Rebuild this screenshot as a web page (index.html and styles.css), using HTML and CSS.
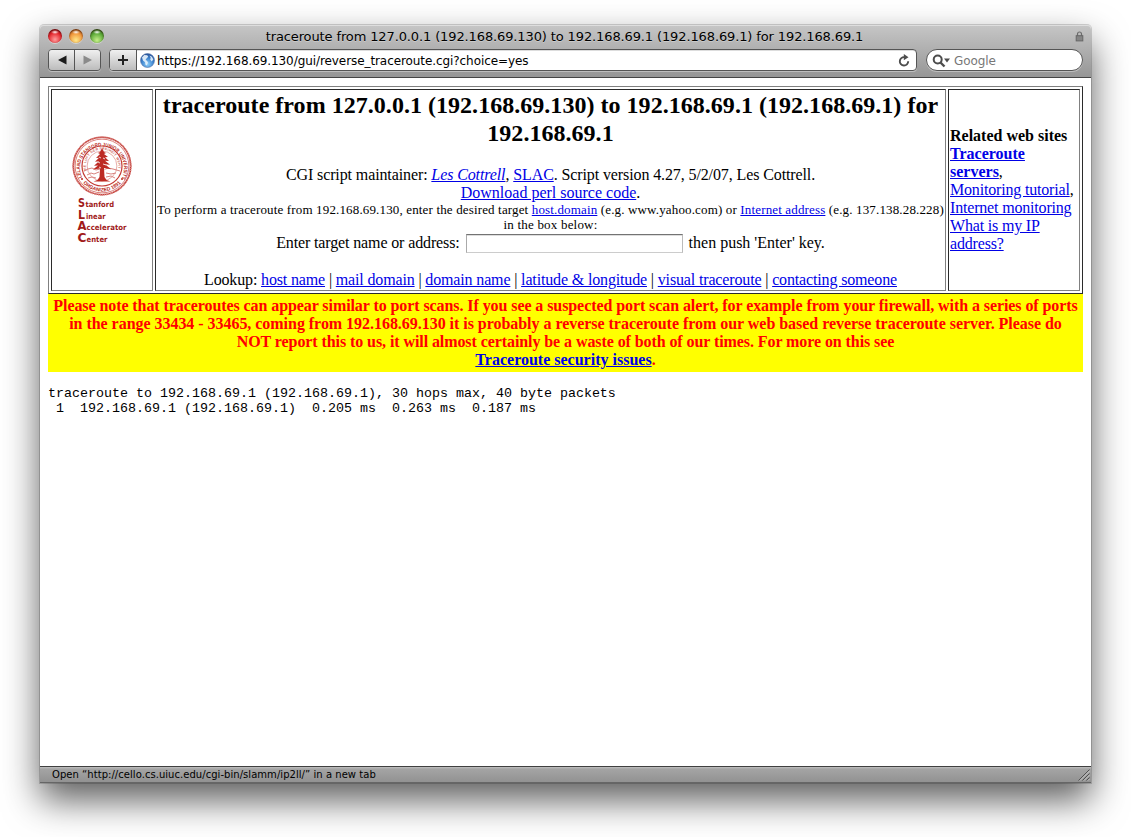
FILE: index.html
```html
<!DOCTYPE html>
<html lang="en">
<head>
<meta charset="utf-8">
<title>traceroute from 127.0.0.1 (192.168.69.130) to 192.168.69.1</title>
<link rel="stylesheet" href="styles.css">
</head>
<body>
<div class="window">
  <header class="chrome">
    <div class="titlebar">
      <div class="lights"><i class="light red"></i><i class="light amber"></i><i class="light green"></i></div>
      <div class="title"><span>traceroute from 127.0.0.1 (192.168.69.130) to 192.168.69.1 (192.168.69.1) for 192.168.69.1</span></div>
      <svg class="lock" width="9" height="11" viewBox="0 0 9 11"><path d="M2.500 5V3a2 2 0 0 1 4 0v2" fill="none" stroke="#6b6b6b" stroke-width="1.200"/><rect x="1.200" y="4.700" width="6.600" height="5.200" fill="#858585" stroke="#666"/></svg>
    </div>
    <div class="toolbar">
      <div class="nav">
        <span class="key"><svg width="24" height="20" viewBox="0 0 24 20"><path d="M8 10l8.500-4.500v9z" fill="#1c1c1c"/></svg></span>
        <span class="key"><svg width="24" height="20" viewBox="0 0 24 20"><path d="M16 10l-8.500-4.500v9z" fill="#8a8a8a"/></svg></span>
      </div>
      <div class="address">
        <span class="key plus"><svg width="27" height="20" viewBox="0 0 27 20"><path d="M8 10h10M13 5v10" stroke="#222" stroke-width="2"/></svg></span>
        <svg class="globe" width="15" height="15" viewBox="0 0 15 15">
          <defs><radialGradient id="sea" cx=".5" cy=".75" r=".75"><stop offset="0" stop-color="#8fd0fa"/><stop offset=".55" stop-color="#3f85cf"/><stop offset="1" stop-color="#234c94"/></radialGradient></defs>
          <circle cx="7.500" cy="7.500" r="7" fill="url(#sea)" stroke="#5576a8" stroke-width=".6"/>
          <path d="M2 4.500L4.200 2l3 .2 1 1.600-1.700 1.700L5.500 7l1.500.8 1 2-1.400 2.700-1.200-.9-.3-2.400L3 7.500zM9.500 2.500l2.400 1.200 1.400 2.700-1.600 2.200-1.500-2 .5-1.800z" fill="#eaf4fc" opacity=".9"/>
        </svg>
        <span class="url">https://192.168.69.130/gui/reverse_traceroute.cgi?choice=yes</span>
        <svg class="reload" width="12" height="13" viewBox="0 0 12 13"><path d="M10.200 7.300A4.200 4.200 0 1 1 6.500 3.200" fill="none" stroke="#4d4d4d" stroke-width="1.900"/><path d="M5.800 0v6.200L10.500 3.200z" fill="#4d4d4d"/></svg>
      </div>
      <div class="search">
        <svg width="19" height="14" viewBox="0 0 19 14"><circle cx="5.700" cy="5.500" r="4" fill="none" stroke="#4d4d4d" stroke-width="2"/><path d="M8.500 8.500l4 4" stroke="#4d4d4d" stroke-width="2.400"/><path d="M12 4.500h6l-3 4z" fill="#4d4d4d"/></svg>
        <span>Google</span>
      </div>
    </div>
  </header>

  <main class="page">
    <div class="frame">
      <div class="cell brand">
        <svg class="seal" width="60" height="60" viewBox="-30 -30 60 60">
          <defs>
            <path id="arc-top" d="M-20 11.500A22 22 0 1 1 20 11.500"/>
            <path id="arc-bottom" d="M-20.500 15A25.400 25.400 0 0 0 20.500 15"/>
            <path id="arc-motto" d="M-15.500 5A16.300 16.300 0 1 1 15.500 5"/>
          </defs>
          <circle r="28.700" fill="#fff" stroke="#c43a34" stroke-width="1.600"/>
          <circle r="28.800" fill="none" stroke="#d98a86" stroke-width="1.800" stroke-dasharray="1 1"/>
          <circle r="26.900" fill="none" stroke="#d0605b" stroke-width=".8"/>
          <circle r="20" fill="none" stroke="#c43a34" stroke-width="1.200"/>
          <circle r="14.900" fill="none" stroke="#dc8985" stroke-width=".7"/>
          <g fill="#b82820" font-family="Liberation Sans, sans-serif" font-weight="bold">
            <text font-size="5.200"><textPath href="#arc-top" textLength="89" lengthAdjust="spacingAndGlyphs">LELAND STANFORD JUNIOR UNIVERSITY</textPath></text>
            <text font-size="5"><textPath href="#arc-bottom" startOffset="50%" text-anchor="middle">ORGANIZED 1891</textPath></text>
            <text font-size="3.400" opacity=".7"><textPath href="#arc-motto" textLength="58">DIE LUFT DER FREIHEIT WEHT</textPath></text>
          </g>
          <circle cx="-20" cy="13" r="1" fill="#b82820"/><circle cx="20" cy="13" r="1" fill="#b82820"/>
          <path d="M-18 5l4-2 4-1 4 2 4-1 4 1 4-2 5 1 7 2M-15 9l4-2 3 1 5-2M4 7l5 1 5-1M-14 12l4-1 4 1M4 11l5-1 4 2" fill="none" stroke="#d9837f" stroke-width="1"/>
          <path d="M0-18l2 4 2 1-2 1 4 3-3 .3 4 3.700-4-.3 5 4-5-.5 6 5-7-1.200.5 9 2 3 4 1.500h-17l4-1.500 2-3 .5-8.500-7 1 5-4-4 .3 5-4.500-4 .5 4-4-3 .2 4-4-2-1 2-1z" fill="#bd2a23"/>
          <path d="M-4-4l2 1M1-8l2 1M1-2l3 1M-3 1l2 1M2 4l3 0M-3-9l2 1" stroke="#fff" stroke-width=".8"/>
        </svg>
        <svg class="wordmark" width="52" height="50" viewBox="0 0 52 50">
          <g fill="#a11a1a" font-family="DejaVu Sans, sans-serif" font-weight="bold">
            <g font-size="12.500"><text x="0" y="10.500" textLength="7" lengthAdjust="spacingAndGlyphs">S</text><text x="0" y="22.500" textLength="7" lengthAdjust="spacingAndGlyphs">L</text><text x="-.5" y="34" textLength="9" lengthAdjust="spacingAndGlyphs">A</text><text x="-.5" y="45.500" textLength="9" lengthAdjust="spacingAndGlyphs">C</text></g>
            <g font-size="7.500"><text x="7.500" y="10.500" textLength="28.500" lengthAdjust="spacingAndGlyphs">tanford</text><text x="8" y="22.500" textLength="19.500" lengthAdjust="spacingAndGlyphs">inear</text><text x="8.500" y="34" textLength="40" lengthAdjust="spacingAndGlyphs">ccelerator</text><text x="8.500" y="45.500" textLength="21" lengthAdjust="spacingAndGlyphs">enter</text></g>
          </g>
        </svg>
      </div>

      <div class="cell main">
        <h1>traceroute from 127.0.0.1 (192.168.69.130) to 192.168.69.1 (192.168.69.1) for<br>192.168.69.1</h1>
        <p><span class="credit">CGI script maintainer: <a><em>Les Cottrell</em></a>, <a>SLAC</a>. Script version 4.27, 5/2/07, Les Cottrell.</span><br><a>Download perl source code</a>.</p>
        <p class="small">To perform a traceroute from 192.168.69.130, enter the desired target <a>host.domain</a> (e.g. www.yahoo.com) or <a>Internet address</a> (e.g. 137.138.28.228)<br><span class="loose-end">in the box below:</span></p>
        <div class="entry"><span class="label">Enter target name or address:</span><span class="field"></span><span>then push 'Enter' key.</span></div>
        <p class="lookup">Lookup: <a>host name</a> | <a>mail domain</a> | <a>domain name</a> | <a>latitude &amp; longitude</a> | <a>visual traceroute</a> | <a>contacting someone</a></p>
      </div>

      <div class="cell related"><p><b>Related web sites<br><a>Traceroute<br>servers</a></b>,<br><a>Monitoring tutorial</a>,<br><a>Internet monitoring</a><br><a>What is my IP<br>address?</a></p></div>
    </div>

    <div class="notice"><span class="tight">Please note that traceroutes can appear similar to port scans. If you see a suspected port scan alert, for example from your firewall, with a series of ports</span><br><span class="snug">in the range 33434 - 33465, coming from 192.168.69.130 it is probably a reverse traceroute from our web based reverse traceroute server. Please do</span><br><span class="tight">NOT report this to us, it will almost certainly be a waste of both of our times. For more on this see</span><br><a>Traceroute security issues</a>.</div>

    <pre>traceroute to 192.168.69.1 (192.168.69.1), 30 hops max, 40 byte packets
 1  192.168.69.1 (192.168.69.1)  0.205 ms  0.263 ms  0.187 ms</pre>
  </main>

  <footer class="status">
    <span>Open “http://cello.cs.uiuc.edu/cgi-bin/slamm/ip2ll/” in a new tab</span>
    <svg width="12" height="12" viewBox="0 0 12 12"><path d="M.5 11.500l11-11M4.500 11.500l7-7M8.500 11.500l3-3" stroke="#505050"/><path d="M2 11.500l9.500-9.500M6 11.500l5.500-5.500M10 11.500l1.500-1.500" stroke="#d2d2d2" stroke-width=".8"/></svg>
  </footer>
</div>
</body>
</html>
```

FILE: styles.css
```css
* { box-sizing: border-box; }
html, body { margin: 0; width: 1131px; height: 837px; overflow: hidden; background: #fff; }
body { padding: 25px 40px 0; font: 16px/18px "Liberation Serif", "Times New Roman", serif; color: #000; }
svg { display: block; flex: none; }
p, h1, pre { margin: 0; }
p, h1 { white-space: nowrap; }
a { color: #0000e6; text-decoration: underline; }

.window {
  width: 1051px; height: 758px; display: flex; flex-direction: column;
  border-radius: 4px 4px 0 0; background: #fff;
  box-shadow: 0 0 0 1px rgba(0,0,0,.16), 0 17px 36px rgba(0,0,0,.64);
}
.chrome {
  height: 53px; flex: none; border-bottom: 1px solid #454545; border-radius: 4px 4px 0 0;
  background: linear-gradient(#c6c6c6, #969696); box-shadow: inset 0 1px #dedede;
  font-family: "DejaVu Sans", sans-serif;
}
.titlebar { height: 22px; display: flex; align-items: center; padding: 0 8px; }
.lights { display: flex; gap: 7px; width: 62px; }
.light { width: 14px; height: 14px; border-radius: 50%; box-shadow: inset 0 1px 2px rgba(40,0,0,.65), 0 1px rgba(255,255,255,.4); }
.red { background: radial-gradient(ellipse 4px 2px at 50% 22%, #fff, transparent), radial-gradient(circle at 50% 75%, #ff9d9d, #e3242b 55%, #7d1216); }
.amber { background: radial-gradient(ellipse 4px 2px at 50% 22%, #fff, transparent), radial-gradient(circle at 50% 80%, #ffe98a, #f0953a 55%, #8a4a12); }
.green { background: radial-gradient(ellipse 4px 2px at 50% 22%, #fff, transparent), radial-gradient(circle at 50% 80%, #c6f08a, #5aa936 55%, #275e16); }
.title { flex: 1; display: flex; justify-content: center; padding: 1px 56px 0 0; font-size: 13px; letter-spacing: -.12px; white-space: nowrap; text-shadow: 0 1px rgba(255,255,255,.3); }
.lock { margin-right: -1px; }
.toolbar { display: flex; height: 26px; padding: 2px 8px 2px; }
.nav, .address, .search { height: 22px; border: 1px solid #555; border-radius: 4px; display: flex; align-items: center; overflow: hidden; box-shadow: 0 1px rgba(255,255,255,.35); }
.nav { width: 53px; margin-right: 8px; }
.key { flex: 1; height: 20px; display: flex; justify-content: center; background: linear-gradient(#f0f0f0, #bcbcbc); }
.key + .key { border-left: 1px solid #555; }
.address { width: 808px; margin-right: 9px; background: #fff; box-shadow: inset 0 1px #ddd, 0 1px rgba(255,255,255,.35); }
.plus { flex: none; width: 27px; border-right: 1px solid #555; }
.globe { margin: 0 2px 0 3px; }
.url { flex: 1; padding-top: 1px; font-size: 12px; letter-spacing: -.08px; white-space: nowrap; }
.reload { margin-right: 6px; }
.search { width: 157px; border-radius: 11px; background: #fff; gap: 3px; padding: 1px 0 0 5px; color: #777; font-size: 12px; letter-spacing: -.1px; }

.page { flex: 1; padding: 8px 8px 0; }
.frame { display: grid; grid-template-columns: 102px 791px 132px; gap: 2px; padding: 2px; height: 208px; border: 1px solid; border-color: #808080 #2b2b2b #2b2b2b #808080; }
.cell { border: 1px solid; border-color: #2b2b2b #808080 #808080 #2b2b2b; padding: 1px; }
.brand { display: flex; flex-direction: column; justify-content: center; align-items: center; padding-top: 2px; }
.wordmark { margin-left: 4px; overflow: visible; }
.main { text-align: center; }
.main h1 { font-size: 24px; line-height: 28px; letter-spacing: .03px; margin-bottom: 19px; }
.credit { letter-spacing: -.11px; }
.main .small { font-size: 13px; line-height: 15px; letter-spacing: .15px; }
.main .loose-end { letter-spacing: .2px; }
.entry { display: flex; justify-content: center; align-items: center; height: 21px; gap: 6px; margin-bottom: 18px; }
.label { letter-spacing: -.13px; }
.field { width: 217px; height: 19px; margin-top: 1px; border: 1px solid; border-color: #737373 #bbb #ccc #aaa; box-shadow: inset 0 1px #ddd; }
.lookup { letter-spacing: -.15px; }
.related { display: flex; align-items: center; padding-top: 1px; letter-spacing: -.18px; }
.related b { letter-spacing: 0; }
.notice { height: 78px; padding-top: 3px; text-align: center; white-space: nowrap; font-weight: bold; color: #f00; background: #ff0; }
.tight { letter-spacing: -.08px; }
.snug { letter-spacing: -.035px; }
pre { padding-top: 14px; font: 13.333px/15px "Liberation Mono", monospace; white-space: pre; }

.status { flex: none; display: flex; justify-content: space-between; align-items: center; height: 17px; padding: 0 1px 0 12px; border-top: 1px solid #404040; border-bottom: 1px solid #666; background: linear-gradient(#c0c0c0, #a4a4a4 2px, #929292); font: 10px/14px "DejaVu Sans", sans-serif; letter-spacing: .045px; }
```
